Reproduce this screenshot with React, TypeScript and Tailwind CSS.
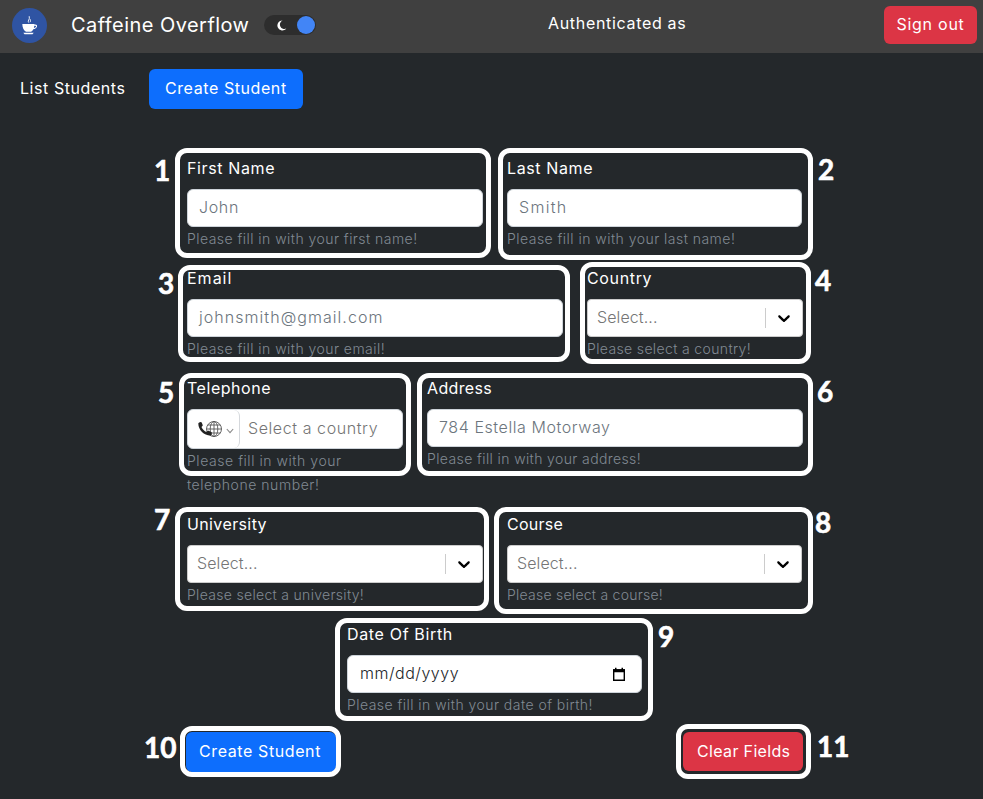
import type { ReactNode } from "react";

function Field({ label, labelClass, hint, hintClass, width, children }: {
  label: string; labelClass: string; hint: string; hintClass: string; width: string; children: ReactNode;
}) {
  return (
    <div className={`mb-4 shrink-0 ${width}`}>
      <div className={`mb-2 h-6 leading-[22px] whitespace-nowrap text-white ${labelClass}`}>{label}</div>
      {children}
      <div className={`text-[14px] leading-6 font-light text-[#818a93] ${hintClass}`}>{hint}</div>
    </div>
  );
}

function TextInput({ text, className }: { text: string; className: string }) {
  return (
    <div className={`flex h-[38px] items-center rounded-md border border-[#ced4da] bg-white pr-3 pb-[3px] pl-[11px] font-light whitespace-nowrap text-[#6c757d] ${className}`}>
      {text}
    </div>
  );
}

function Select() {
  return (
    <div className="flex h-[38px] items-center rounded border border-[#cccccc] bg-white">
      <span className="flex-1 pb-[3px] pl-[9px] font-light tracking-[0.1px] text-[#757575]">Select...</span>
      <span className="h-5 w-px bg-[#cccccc]" />
      <span className="flex w-9 justify-center">
        <svg width="20" height="20" viewBox="0 0 20 20" fill="#000">
          <path d="M4.516 7.548c0.436-0.446 1.043-0.481 1.576 0l3.908 3.747 3.908-3.747c0.533-0.481 1.141-0.446 1.574 0 0.436 0.445 0.408 1.197 0 1.615-0.406 0.418-4.695 4.502-4.695 4.502-0.217 0.223-0.502 0.335-0.787 0.335s-0.57-0.112-0.789-0.335c0 0-4.287-4.084-4.695-4.502s-0.436-1.17 0-1.615z" />
        </svg>
      </span>
    </div>
  );
}

function PhoneGlobe() {
  return (
    <svg width="26" height="18" viewBox="0 0 26 18" fill="none">
      <g stroke="#555" strokeWidth="0.9">
        <circle cx="17" cy="9" r="7.5" />
        <ellipse cx="17" cy="9" rx="3.8" ry="7.5" />
        <path d="M17 1.5v15M9.5 9h15M10.8 5h12.4M10.8 13h12.4" />
      </g>
      <path
        d="M2.2 2.4 3.6 2c.5-.1.9.1 1.1.6l1 2.4c.2.4.1.8-.3 1.1L4.500 7c.8 2 2.500 3.900 4.700 5l1.300-1.100c.3-.3.700-.3 1.100-.1l2.700 1.300c.4.2.600.6.5 1l-.4 1.700c-.1.500-.5.800-1 .8C7 15.400 1.400 10 1.300 3.500c0-.5.4-1 .9-1.100Z"
        fill="#222"
      />
    </svg>
  );
}

const frames = [
  "left-[175px] top-[148px] w-[316px] h-[110px]",
  "left-[498px] top-[148px] w-[315px] h-[112px]",
  "left-[178px] top-[265px] w-[392px] h-[97px]",
  "left-[580px] top-[262px] w-[231px] h-[102px]",
  "left-[179px] top-[373px] w-[232px] h-[103px]",
  "left-[417px] top-[373px] w-[396px] h-[103px]",
  "left-[175px] top-[507px] w-[314px] h-[104px]",
  "left-[494px] top-[507px] w-[319px] h-[107px]",
  "left-[335px] top-[618px] w-[318px] h-[103px]",
  "left-[180px] top-[726px] w-[161px] h-[51px]",
  "left-[676px] top-[724px] w-[135px] h-[55px]",
];

const numbers = [
  "left-[154px] top-[154px]",
  "left-[818px] top-[153px]",
  "left-[158px] top-[267px]",
  "left-[815px] top-[264px]",
  "left-[158px] top-[376px]",
  "left-[817px] top-[375px]",
  "left-[154px] top-[503px]",
  "left-[815px] top-[506px]",
  "left-[658px] top-[620px]",
  "left-[144px] top-[731px]",
  "left-[817px] top-[730px]",
];

export default function App() {
  return (
    <div className="relative h-[799px] w-[983px] overflow-hidden bg-[#24282b] font-['Inter',sans-serif] text-[16px] text-white">
      <header className="flex h-[53px] items-center bg-[#404040] pr-[6px] pl-3">
        <div className="mb-[2px] flex size-[35px] items-center justify-center rounded-full bg-[#2f54a3]">
          <svg width="17" height="22" viewBox="0 0 17 22" fill="none">
            <path d="M7.600 7.500C6.300 5.700 9.200 4.600 8.200 1.200M9 7.200c1-1.300.3-2 .2-3" stroke="#fff" strokeWidth="0.9" />
            <path d="M1.300 9h12.200v.7c1.800-.4 2.900.4 2.500 1.900-.4 1.600-1.700 2.500-3.700 2.600-.7 1.300-1.600 2.200-2.500 2.600H5c-2.400-1.200-3.600-4.200-3.700-7.800Zm12 1.700-.4 2.400c1.100-.1 1.900-.7 2.100-1.500.2-.7-.5-1.100-1.700-.9Z" fill="#fff" fillRule="evenodd" />
            <path d="M2.300 17.800h10.400l-1.200 1.400h-8Z" fill="#fff" />
          </svg>
        </div>
        <div className="mb-1 ml-6 w-[193px] text-[20px] leading-[30px] tracking-[0.45px] whitespace-nowrap">Caffeine Overflow</div>
        <div className="mb-[3px] flex h-5 w-[52px] items-center justify-between rounded-full bg-[#2d2d2d] pr-[1px] pl-3">
          <svg width="11" height="11" viewBox="0 0 11 11">
            <path d="M6.500.5A5 5 0 1 0 10.300 8.600 4.300 4.300 0 0 1 6.500.5Z" fill="#fff" />
          </svg>
          <span className="size-[18px] rounded-full bg-[#4285f6]" />
        </div>
        <div className="mb-[7px] ml-[232px] flex-1 tracking-[0.68px] whitespace-nowrap">Authenticated as</div>
        <div className="mb-[3px] flex h-[38px] w-[93px] items-center justify-center rounded-md bg-[#dc3545] pb-[3px] tracking-[0.74px]">Sign out</div>
      </header>

      <nav className="flex h-[88px] items-start pt-4">
        <div className="ml-5 flex h-10 w-[129px] items-center pb-[3px] tracking-[0.56px]">List Students</div>
        <div className="flex h-10 w-[154px] items-center rounded-md bg-[#0d6efd] pb-[3px] pl-4 tracking-[0.58px]">Create Student</div>
      </nav>

      <main className="mt-4 ml-[187px] w-[616px]">
        <div className="flex gap-6">
          <Field label="First Name" labelClass="tracking-[0.62px]" hint="Please fill in with your first name!" hintClass="tracking-[0.46px]" width="w-[296px]">
            <TextInput text="John" className="tracking-[0.65px]" />
          </Field>
          <Field label="Last Name" labelClass="tracking-[0.62px]" hint="Please fill in with your last name!" hintClass="tracking-[0.47px]" width="w-[295px]">
            <TextInput text="Smith" className="tracking-[1.3px]" />
          </Field>
        </div>
        <div className="flex gap-6">
          <Field label="Email" labelClass="tracking-[1px]" hint="Please fill in with your email!" hintClass="tracking-[0.46px]" width="w-[376px]">
            <TextInput text="johnsmith@gmail.com" className="tracking-[1.05px]" />
          </Field>
          <Field label="Country" labelClass="tracking-[0.64px]" hint="Please select a country!" hintClass="tracking-[0.36px]" width="w-[216px]">
            <Select />
          </Field>
        </div>
        <div className="flex gap-6">
          <Field label="Telephone" labelClass="tracking-[0.54px]" hint="Please fill in with your telephone number!" hintClass="tracking-[0.55px] pr-10" width="w-[216px]">
            <div className="flex h-10 items-center rounded-md border border-[#ced4da] bg-white">
              <div className="flex h-full w-[52px] items-center rounded-md border-r border-[#d5d8dc] pl-[9px]">
                <PhoneGlobe />
                <svg className="mt-1 ml-[3px]" width="8" height="6" viewBox="0 0 8 6" fill="none" stroke="#888" strokeWidth="1.100">
                  <path d="m.8 1 3.200 3.600L7.200 1" />
                </svg>
              </div>
              <span className="pb-[2px] pl-2 font-light tracking-[0.58px] whitespace-nowrap text-[#757575]">Select a country</span>
            </div>
          </Field>
          <Field label="Address" labelClass="tracking-[0.36px]" hint="Please fill in with your address!" hintClass="tracking-[0.39px]" width="w-[376px]">
            <TextInput text="784 Estella Motorway" className="tracking-[0.58px]" />
          </Field>
        </div>
        <div className="flex gap-6">
          <Field label="University" labelClass="tracking-[0.38px]" hint="Please select a university!" hintClass="tracking-[0.31px]" width="w-[296px]">
            <Select />
          </Field>
          <Field label="Course" labelClass="tracking-[0.26px]" hint="Please select a course!" hintClass="tracking-[0.25px]" width="w-[295px]">
            <Select />
          </Field>
        </div>
        <div className="flex justify-center pr-px">
          <Field label="Date Of Birth" labelClass="tracking-[0.66px]" hint="Please fill in with your date of birth!" hintClass="tracking-[0.46px] whitespace-nowrap" width="w-[295px]">
            <div className="flex h-[38px] items-center justify-between rounded-md border border-[#ced4da] bg-white pr-[15px] pl-3 font-light text-[#212529]">
              <span className="pb-[3px] tracking-[0.52px]">mm/dd/yyyy</span>
              <svg width="14" height="15" viewBox="0 0 14 15" fill="none">
                <path d="M1.700 3h10.600v10.300H1.700Z" stroke="#000" strokeWidth="1.400" />
                <path d="M1 2.300h12v3H1ZM3 .8h1.500v2H3ZM9.500.8H11v2H9.500Z" fill="#000" />
              </svg>
            </div>
          </Field>
        </div>
        <div className="-mt-px flex justify-between">
          <div className="-ml-px flex h-10 w-[150px] items-center rounded-md bg-[#0d6efd] pb-[2px] pl-[13px] tracking-[0.6px] whitespace-nowrap">Create Student</div>
          <div className="flex h-[39px] w-[120px] items-center rounded-md bg-[#dc3545] pb-px pl-[14px] tracking-[0.34px] whitespace-nowrap">Clear Fields</div>
        </div>
      </main>

      {frames.map((place) => (
        <div key={place} className={`absolute rounded-[12px] border-[5px] border-white ${place}`} />
      ))}
      {numbers.map((place, i) => (
        <div key={place} className={`absolute font-['Lato',sans-serif] text-[28px] leading-8 font-bold [-webkit-text-stroke:0.6px_white] ${place}`}>{i + 1}</div>
      ))}
    </div>
  );
}
